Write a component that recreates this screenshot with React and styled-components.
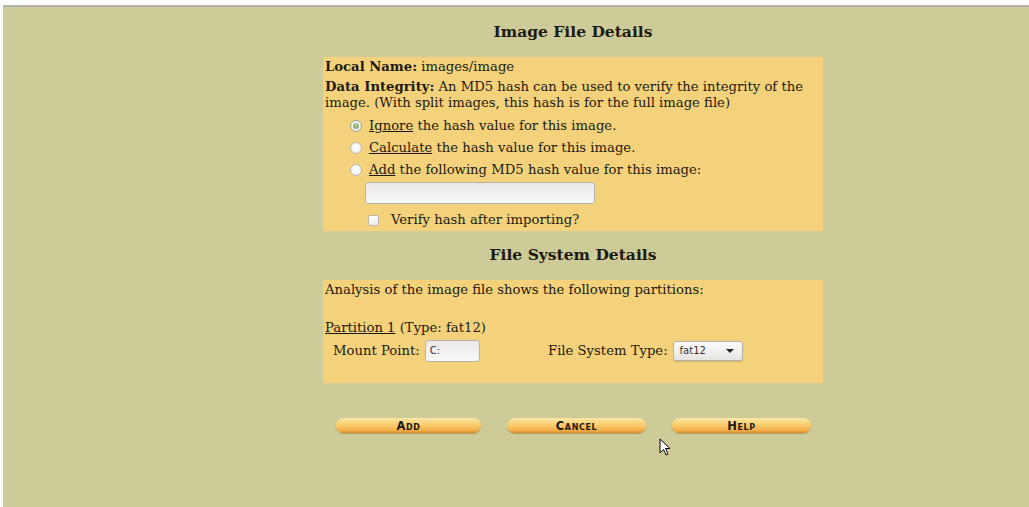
import styled, { createGlobalStyle } from 'styled-components'

const Global = createGlobalStyle`
  html, body {
    margin: 0;
    padding: 0;
    background: #ffffff;
  }
  body {
    font-family: "DejaVu Serif", serif;
    font-size: 13.2px;
    color: #1c1a12;
  }
`

const Frame = styled.div`
  margin: 5px 0 0 3px;
  border-top: 2px solid #b4b4b0;
  background: #cdcc99;
  height: 500px;
  position: relative;
  overflow: hidden;
`

const Column = styled.div`
  width: 500px;
  margin-left: 320px;
  padding-top: 15px;
`

const Heading = styled.h3`
  margin: ${({ $top = 0 }) => $top}px 0 15px;
  font-size: 15.5px;
  font-weight: bold;
  text-align: center;
  line-height: 20px;
`

const Panel = styled.div`
  background: #f3d27b;
  padding: ${({ $pad }) => $pad};
  line-height: 16px;
`

const Line = styled.div`
  margin: ${({ $mt = 0 }) => $mt}px 0 ${({ $mb = 0 }) => $mb}px;
`

const Option = styled.label`
  display: flex;
  align-items: center;
  gap: 7px;
  height: 22px;
  margin-top: ${({ $mt = 0 }) => $mt}px;
  padding-left: ${({ $indent }) => $indent}px;
`

const Radio = styled.span`
  width: 12px;
  height: 12px;
  border-radius: 50%;
  box-sizing: border-box;
  border: 1px solid ${({ $on }) => ($on ? '#98a48a' : '#bdbab1')};
  background: radial-gradient(circle at 50% 40%, #ffffff 0%, #ecebe8 100%);
  display: flex;
  align-items: center;
  justify-content: center;

  &::after {
    content: '';
    width: 6px;
    height: 6px;
    border-radius: 50%;
    background: ${({ $on }) =>
      $on ? 'radial-gradient(circle at 50% 40%, #b9d2a4 0%, #6f9158 100%)' : 'transparent'};
  }
`

const Check = styled.span`
  width: 11px;
  height: 11px;
  box-sizing: border-box;
  border: 1px solid #b9b6ad;
  border-radius: 2px;
  background: linear-gradient(#ffffff, #ecebe8);
  margin-right: 5px;
`

const U = styled.span`
  text-decoration: underline;
`

const TextBox = styled.div`
  box-sizing: border-box;
  width: ${({ $w }) => $w}px;
  height: 22px;
  border: 1px solid #b6b3aa;
  border-radius: 3px;
  background: linear-gradient(#e9e8e6, #f8f8f7);
  font-family: "DejaVu Sans", sans-serif;
  font-size: 10px;
  line-height: 20px;
  padding-left: 4px;
  color: #333;
`

const HashRow = styled.div`
  padding: 1px 0 5px 40px;
`

const MountRow = styled.div`
  display: flex;
  align-items: center;
  height: 22px;
  padding-left: 8px;
  margin-top: 4px;
`

const Field = styled.div`
  display: flex;
  align-items: center;
  gap: 5px;
  width: ${({ $w }) => ($w ? `${$w}px` : 'auto')};
`

const Select = styled.div`
  box-sizing: border-box;
  width: 70px;
  height: 20px;
  border: 1px solid #b6b3aa;
  border-radius: 3px;
  background: linear-gradient(#fbfbfa, #e6e5e2);
  box-shadow: 0 1px 1px rgba(0, 0, 0, 0.15);
  font-family: "DejaVu Sans", sans-serif;
  font-size: 10px;
  line-height: 18px;
  padding: 0 8px 0 6px;
  color: #333;
  display: flex;
  justify-content: space-between;
  align-items: center;

  &::after {
    content: '';
    border-left: 4px solid transparent;
    border-right: 4px solid transparent;
    border-top: 4px solid #222;
  }
`

const Buttons = styled.div`
  display: flex;
  gap: 26px;
  margin: 35px 0 0 13px;
`

const Button = styled.button`
  width: ${({ $w }) => $w}px;
  height: 15px;
  padding: 0;
  border: none;
  border-radius: 8px;
  background: linear-gradient(#fbe7a6 0%, #f8cd6e 45%, #f3b24c 80%, #dc8c2f 100%);
  box-shadow: 0 1px 1px rgba(140, 90, 20, 0.45);
  font-family: "DejaVu Sans", sans-serif;
  font-weight: bold;
  font-size: 11.5px;
  font-variant: small-caps;
  letter-spacing: 0.6px;
  color: #1d1a14;
  line-height: 14px;
`

const Pointer = styled.svg`
  position: absolute;
  left: 656px;
  top: 431px;
`

export default function App() {
  return (
    <>
      <Global />
      <Frame>
        <Column>
          <Heading>Image File Details</Heading>
          <Panel $pad="2px 2px 0 2px">
            <Line $mb={4}>
              <b>Local Name:</b> images/image
            </Line>
            <Line>
              <b>Data Integrity:</b> An MD5 hash can be used to verify the integrity of the
              image. (With split images, this hash is for the full image file)
            </Line>
            <Option $indent={25} $mt={4}>
              <Radio $on />
              <span><U>Ignore</U> the hash value for this image.</span>
            </Option>
            <Option $indent={25}>
              <Radio />
              <span><U>Calculate</U> the hash value for this image.</span>
            </Option>
            <Option $indent={25}>
              <Radio />
              <span><U>Add</U> the following MD5 hash value for this image:</span>
            </Option>
            <HashRow>
              <TextBox $w={230} />
            </HashRow>
            <Option $indent={43}>
              <Check />
              <span>Verify hash after importing?</span>
            </Option>
          </Panel>
          <Heading $top={14}>File System Details</Heading>
          <Panel $pad="2px 2px 21px 2px">
            <Line>Analysis of the image file shows the following partitions:</Line>
            <Line>&nbsp;</Line>
            <Line $mt={6}>
              <U>Partition 1</U> (Type: fat12)
            </Line>
            <MountRow>
              <Field $w={215}>
                Mount Point: <TextBox $w={55}>C:</TextBox>
              </Field>
              <Field>
                File System Type: <Select>fat12</Select>
              </Field>
            </MountRow>
          </Panel>
          <Buttons>
            <Button $w={145}>Add</Button>
            <Button $w={139}>Cancel</Button>
            <Button $w={139}>Help</Button>
          </Buttons>
        </Column>
        <Pointer width="12" height="19" viewBox="0 0 12 19">
          <path d="M1 1 L1 15 L4.5 11.5 L7 17 L9 16 L6.5 10.5 L11 10.5 Z" fill="#fff" stroke="#000" strokeWidth="1" />
        </Pointer>
      </Frame>
    </>
  )
}
